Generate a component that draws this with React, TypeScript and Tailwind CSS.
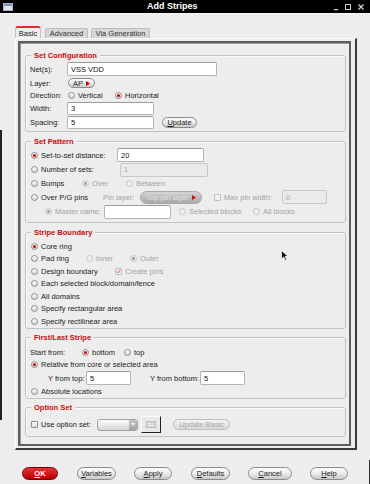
import React from "react";

const F = "font-['Liberation_Sans',Arial,sans-serif]";

function Radio({ on, dis }: { on?: boolean; dis?: boolean }) {
  return (
    <span
      className={`w-[7px] h-[7px] rounded-full border shrink-0 flex items-center justify-center ${
        dis ? "border-[#c6c6c6] bg-[#eeeeee]" : "border-[#8c8c8c] bg-gradient-to-b from-[#ffffff] to-[#d4d4d4]"
      }`}
    >
      {on && <span className={`w-[3px] h-[3px] rounded-full ${dis ? "bg-[#9a9a9a]" : "bg-[#d40000]"}`} />}
    </span>
  );
}

function Check({ on, dis }: { on?: boolean; dis?: boolean }) {
  return (
    <span
      className={`w-[7px] h-[7px] rounded-[1px] border shrink-0 flex items-center justify-center ${
        dis ? "border-[#c0c0c0] bg-[#f0f0f0]" : "border-[#8c8c8c] bg-gradient-to-b from-[#ffffff] to-[#d8d8d8]"
      }`}
    >
      {on && (
        <svg width="7" height="7" viewBox="0 0 7 7">
          <path d="M1 3.5 L2.8 5.5 L6 1" stroke="#d05050" strokeWidth="1.3" fill="none" />
        </svg>
      )}
    </span>
  );
}

function RL({
  on,
  dis,
  label,
  className = "",
}: {
  on?: boolean;
  dis?: boolean;
  label: string;
  className?: string;
}) {
  return (
    <div className={`flex items-center shrink-0 ${className}`}>
      <Radio on={on} dis={dis} />
      <span className={`ml-[3px] whitespace-nowrap ${dis ? "text-[#a3a3a3]" : ""}`}>{label}</span>
    </div>
  );
}

function Field({ v, dis, className = "" }: { v: string; dis?: boolean; className?: string }) {
  return (
    <div
      className={`shrink-0 border rounded-[2px] flex items-center pl-[3px] ${
        dis
          ? "bg-[#eaeaea] border-[#c8c8c8] text-[#a8a8a8]"
          : "bg-white border-[#b4b4b4] border-t-[#9a9a9a] text-[#111]"
      } ${className}`}
    >
      {v}
    </div>
  );
}

function Pill({ children, className = "" }: { children: React.ReactNode; className?: string }) {
  return (
    <div
      className={`shrink-0 rounded-full border border-[#8a8a8a] bg-gradient-to-b from-[#fbfbfb] via-[#ececec] to-[#c9c9c9] flex items-center justify-center whitespace-nowrap ${className}`}
    >
      {children}
    </div>
  );
}

function Tri({ color = "#c80000" }: { color?: string }) {
  return (
    <svg width="4" height="5" viewBox="0 0 4 5" className="ml-[3px]">
      <polygon points="0,0 4,2.5 0,5" fill={color} />
    </svg>
  );
}

function Group({ title, className, children }: { title: string; className: string; children: React.ReactNode }) {
  return (
    <div
      className={`relative ml-[5px] w-[321px] shrink-0 rounded-[3px] border border-[#c2c2c2] shadow-[inset_1px_1px_0_#fafafa] ${className}`}
    >
      <div className="absolute -top-[5px] left-[5px] px-[3px] bg-[#ededed] text-[#cc0a0a] font-bold leading-[9px]">
        {title}
      </div>
      {children}
    </div>
  );
}

function U({ c, rest }: { c: string; rest: string }) {
  return (
    <span>
      <span className="underline underline-offset-[1px]">{c}</span>
      {rest}
    </span>
  );
}

export default function App() {
  return (
    <div
      className={`relative w-[370px] h-[484px] overflow-hidden bg-[#ededed] ${F} text-[7.5px] leading-[9px] text-[#1c1c1c]`}
    >
      {/* Title bar */}
      <div className="h-[13px] bg-black flex items-center">
        <svg width="10" height="8" viewBox="0 0 10 8" className="ml-[3px] shrink-0">
          <rect x="0.5" y="0.5" width="9" height="7" fill="#dfe4ee" stroke="#aab4c8" />
          <rect x="1" y="1" width="8" height="2" fill="#7d8fb5" />
        </svg>
        <div className="ml-[134px] text-white font-bold text-[9px] leading-[13px] whitespace-nowrap">Add Stripes</div>
        <div className="ml-auto mr-[5px] flex items-center">
          <svg width="8" height="8" viewBox="0 0 8 8" className="shrink-0">
            <rect x="2" y="6" width="4" height="1.2" fill="#cfcfcf" />
          </svg>
          <svg width="8" height="8" viewBox="0 0 8 8" className="ml-[4px] shrink-0">
            <rect x="1.5" y="1.5" width="5" height="5" fill="none" stroke="#cfcfcf" strokeWidth="1" />
          </svg>
          <svg width="8" height="8" viewBox="0 0 8 8" className="ml-[5px] shrink-0">
            <path d="M1.5 1.5 L6.5 6.5 M6.5 1.5 L1.5 6.5" stroke="#d6d6d6" strokeWidth="1.2" />
          </svg>
        </div>
      </div>

      {/* Tabs */}
      <div className="h-[25px] flex items-end pl-[15px] border-t border-[#f6f6f6]">
        <div className="w-[26px] h-[12px] rounded-t-[3px] border-x border-[#c4c4c4] border-t-2 border-t-[#d83030] bg-[#ededed] flex items-center justify-center">
          Basic
        </div>
        <div className="ml-[4px] w-[43px] h-[10px] rounded-t-[2px] border border-b-0 border-[#bdbdbd] bg-[#d7d7d7] flex items-center justify-center text-[#333]">
          Advanced
        </div>
        <div className="ml-[3px] w-[59px] h-[10px] rounded-t-[2px] border border-b-0 border-[#bdbdbd] bg-[#d7d7d7] flex items-center justify-center text-[#333]">
          Via Generation
        </div>
      </div>

      {/* Tab panel */}
      <div className="ml-[15px] w-[342px] h-[412px] border-l border-t border-[#fbfbfb] border-r-2 border-b-2 border-r-[#3a3a3a] border-b-[#3a3a3a] pl-[2px] pt-[2px] pr-[4px] pb-[2px]">
        <div className="w-[333px] h-[405px] border-2 border-[#5f5f5f] shadow-[inset_1px_1px_0_#9a9a9a] flex flex-col">
          {/* Set Configuration */}
          <Group title="Set Configuration" className="mt-[12px] h-[77px] pt-[6px]">
            <div className="h-[14px] flex items-center pl-[4px]">
              <span className="w-[37px] shrink-0">Net(s):</span>
              <Field v="VSS VDD" className="w-[150px] h-[14px]" />
            </div>
            <div className="h-[14px] flex items-center pl-[4px]">
              <span className="w-[37px] shrink-0">Layer:</span>
              <Pill className="ml-[1px] w-[27px] h-[10px] border-[#7a7a7a]">
                AP
                <Tri />
              </Pill>
            </div>
            <div className="h-[11px] flex items-center pl-[4px]">
              <span className="w-[37px] shrink-0">Direction:</span>
              <RL label="Vertical" className="ml-[1px] w-[47px]" />
              <RL on label="Horizontal" />
            </div>
            <div className="h-[14px] flex items-center pl-[4px]">
              <span className="w-[37px] shrink-0">Width:</span>
              <Field v="3" className="w-[87px] h-[13px]" />
            </div>
            <div className="h-[14px] flex items-center pl-[4px]">
              <span className="w-[37px] shrink-0">Spacing:</span>
              <Field v="5" className="w-[87px] h-[13px]" />
              <Pill className="ml-[8px] w-[35px] h-[11px]">
                <U c="U" rest="pdate" />
              </Pill>
            </div>
          </Group>

          {/* Set Pattern */}
          <Group title="Set Pattern" className="mt-[9px] h-[82px] pt-[6px]">
            <div className="h-[14px] flex items-center pl-[5px]">
              <RL on label="Set-to-set distance:" className="w-[86px]" />
              <Field v="20" className="w-[87px] h-[14px]" />
            </div>
            <div className="h-[15px] flex items-center pl-[5px]">
              <RL label="Number of sets:" className="w-[89px]" />
              <Field dis v="1" className="w-[88px] h-[14px]" />
            </div>
            <div className="h-[13px] flex items-center pl-[5px]">
              <RL label="Bumps" className="w-[51px]" />
              <RL dis on label="Over" className="w-[44px]" />
              <RL dis label="Between" />
            </div>
            <div className="h-[14px] flex items-center pl-[5px]">
              <RL label="Over P/G pins" className="w-[72px]" />
              <span className="w-[37px] shrink-0 text-[#a3a3a3]">Pin layer:</span>
              <div className="shrink-0 w-[62px] h-[13px] rounded-full border border-[#a8a8a8] bg-gradient-to-b from-[#d4d4d4] to-[#a9a9a9] flex items-center justify-center text-[#f2f2f2] [text-shadow:0_0_1px_#888]">
                Top pin layer
                <Tri color="#d01010" />
              </div>
              <div className="ml-[12px]">
                <Check dis />
              </div>
              <span className="ml-[3px] w-[58px] shrink-0 text-[#a3a3a3]">Max pin width:</span>
              <Field dis v="0" className="w-[45px] h-[14px]" />
            </div>
            <div className="h-[15px] flex items-center pl-[19px]">
              <RL dis on label="Master name:" className="w-[59px]" />
              <Field v="" className="w-[67px] h-[14px]" />
              <RL dis label="Selected blocks" className="ml-[8px] w-[74px]" />
              <RL dis label="All blocks" />
            </div>
          </Group>

          {/* Stripe Boundary */}
          <Group title="Stripe Boundary" className="mt-[9px] h-[97px] pt-[7px]">
            <div className="h-[12.5px] flex items-center pl-[5px]">
              <RL on label="Core ring" />
            </div>
            <div className="h-[12.5px] flex items-center pl-[5px]">
              <RL label="Pad ring" className="w-[55px]" />
              <RL dis label="Inner" className="w-[44px]" />
              <RL dis on label="Outer" />
            </div>
            <div className="h-[12.5px] flex items-center pl-[5px]">
              <RL label="Design boundary" className="w-[84px]" />
              <Check dis on />
              <span className="ml-[3px] text-[#a3a3a3]">Create pins</span>
            </div>
            <div className="h-[12.5px] flex items-center pl-[5px]">
              <RL label="Each selected block/domain/fence" />
            </div>
            <div className="h-[12.5px] flex items-center pl-[5px]">
              <RL label="All domains" />
            </div>
            <div className="h-[12.5px] flex items-center pl-[5px]">
              <RL label="Specify rectangular area" />
            </div>
            <div className="h-[12.5px] flex items-center pl-[5px]">
              <RL label="Specify rectilinear area" />
            </div>
          </Group>

          {/* First/Last Stripe */}
          <Group title="First/Last Stripe" className="mt-[8px] h-[62px] pt-[8px]">
            <div className="h-[12px] flex items-center pl-[4px]">
              <span className="w-[52px] shrink-0">Start from:</span>
              <RL on label="bottom" className="w-[42px]" />
              <RL label="top" />
            </div>
            <div className="h-[13px] flex items-center pl-[5px]">
              <RL on label="Relative from core or selected area" />
            </div>
            <div className="h-[14px] flex items-center pl-[22px]">
              <span className="w-[38px] shrink-0">Y from top:</span>
              <Field v="5" className="w-[45px] h-[14px]" />
              <span className="ml-[19px] w-[50px] shrink-0">Y from bottom:</span>
              <Field v="5" className="w-[45px] h-[14px]" />
            </div>
            <div className="h-[13px] flex items-center pl-[5px]">
              <RL label="Absolute locations" />
            </div>
          </Group>

          {/* Option Set */}
          <Group title="Option Set" className="mt-[8px] h-[30px] pt-[8px]">
            <div className="h-[17px] flex items-center pl-[5px]">
              <Check />
              <span className="ml-[3px] w-[56px] shrink-0">Use option set:</span>
              <div className="shrink-0 w-[41px] h-[12px] rounded-[3px] border border-[#a2a2a2] bg-gradient-to-b from-[#fdfdfd] to-[#d6d6d6] flex justify-end overflow-hidden">
                <div className="w-[8px] h-full bg-gradient-to-b from-[#c4c4c4] to-[#a4a4a4] flex items-center justify-center">
                  <svg width="4" height="3" viewBox="0 0 4 3">
                    <polygon points="0,0 4,0 2,3" fill="#f4f4f4" />
                  </svg>
                </div>
              </div>
              <div className="ml-[3px] shrink-0 w-[20px] h-[17px] border border-[#fafafa] border-r-[#222] border-b-[#222] bg-[#e9e9e9] flex items-center justify-center">
                <svg width="10" height="7" viewBox="0 0 10 7">
                  <rect x="0.5" y="0.5" width="9" height="6" fill="#d4d4d4" stroke="#bdbdbd" />
                  <rect x="2" y="2" width="2" height="1" fill="#f5f5f5" />
                  <rect x="2" y="4" width="6" height="1" fill="#f5f5f5" />
                </svg>
              </div>
              <div className="ml-[12px] shrink-0 w-[57px] h-[11px] rounded-full border border-[#bdbdbd] bg-gradient-to-b from-[#f4f4f4] to-[#d8d8d8] flex items-center justify-center text-[#a8a8a8]">
                Update Basic
              </div>
            </div>
          </Group>
        </div>
      </div>

      {/* Bottom buttons */}
      <div className="mt-[17px] h-[13px] flex items-center pl-[22px]">
        <div className="shrink-0 w-[36px] h-[13px] rounded-full border border-[#7a0000] bg-gradient-to-b from-[#e23030] to-[#b00000] flex items-center justify-center text-white font-bold">
          <U c="O" rest="K" />
        </div>
        <Pill className="ml-[19px] w-[39px] h-[13px]">
          <U c="V" rest="ariables" />
        </Pill>
        <Pill className="ml-[18px] w-[38px] h-[13px]">
          <U c="A" rest="pply" />
        </Pill>
        <Pill className="ml-[19px] w-[39px] h-[13px]">
          <U c="D" rest="efaults" />
        </Pill>
        <Pill className="ml-[18px] w-[44px] h-[13px]">
          <U c="C" rest="ancel" />
        </Pill>
        <Pill className="ml-[18px] w-[38px] h-[13px]">
          <U c="H" rest="elp" />
        </Pill>
      </div>

      {/* Background window edges */}
      <div className="absolute left-0 top-[130px] w-[2px] h-[290px] bg-[#222]" />
      <div className="absolute right-0 top-[460px] w-[1px] h-[24px] bg-[#333]" />

      {/* Mouse cursor */}
      <svg className="absolute left-[281px] top-[250px]" width="8" height="11" viewBox="0 0 8 11">
        <polygon points="0.5,0.5 0.5,9 2.6,7 4.2,10.3 5.6,9.6 4,6.5 7,6.5" fill="#111" stroke="#fff" strokeWidth="0.7" />
      </svg>
    </div>
  );
}
